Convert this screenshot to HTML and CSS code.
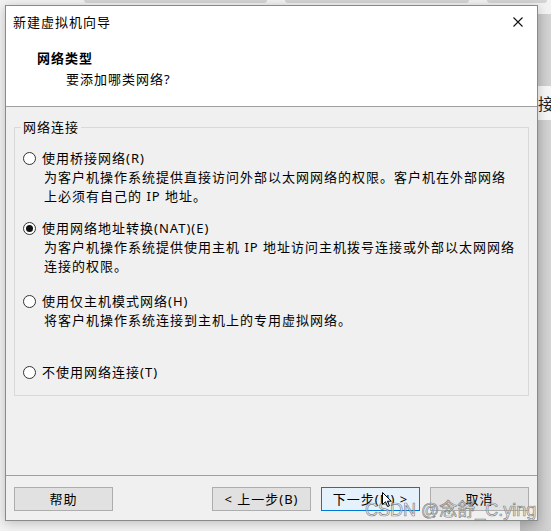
FILE: index.html
```html
<!DOCTYPE html>
<html lang="zh-CN">
<head>
<meta charset="utf-8">
<title>新建虚拟机向导</title>
<link rel="stylesheet" href="styles.css">
</head>
<body>
<div class="desktop">
  <div class="tabs"><span class="tab t1"></span><span class="tab t2"></span><span class="tab t3"></span></div>
  <div class="side-shade"></div>
  <div class="side-win"><span class="side-text">接</span></div>

  <div class="dialog">
    <div class="top">
      <div class="titlebar">
        <span class="title">新建虚拟机向导</span>
        <svg class="close" width="10" height="10" viewBox="0 0 10 10"><path d="M0.5 0.5 L9.5 9.5 M9.5 0.5 L0.5 9.5" stroke="#111" stroke-width="1.1" fill="none"/></svg>
      </div>
      <div class="header">
        <div class="h1">网络类型</div>
        <div class="sub">要添加哪类网络?</div>
      </div>
    </div>

    <div class="content">
      <fieldset class="group">
        <legend>网络连接</legend>
        <div class="opt">
          <div class="radio-row"><span class="radio"></span><span>使用桥接网络(R)</span></div>
          <p class="desc">为客户机操作系统提供直接访问外部以太网网络的权限。客户机在外部网络<br>上必须有自己的 IP 地址。</p>
        </div>
        <div class="opt opt2">
          <div class="radio-row"><span class="radio checked"></span><span>使用网络地址转换(NAT)(E)</span></div>
          <p class="desc">为客户机操作系统提供使用主机 IP 地址访问主机拨号连接或外部以太网网络<br>连接的权限。</p>
        </div>
        <div class="opt opt3">
          <div class="radio-row"><span class="radio"></span><span>使用仅主机模式网络(H)</span></div>
          <p class="desc">将客户机操作系统连接到主机上的专用虚拟网络。</p>
        </div>
        <div class="opt opt4">
          <div class="radio-row"><span class="radio"></span><span>不使用网络连接(T)</span></div>
        </div>
      </fieldset>
    </div>

    <div class="footer">
      <button class="btn">帮助</button>
      <div class="spacer"></div>
      <button class="btn">&lt; 上一步(B)</button>
      <button class="btn primary">下一步(N) &gt;</button>
      <button class="btn">取消</button>
    </div>
  </div>

  <div class="watermark">CSDN @念舒_C.ying</div>
  <svg class="cursor" width="12" height="16" viewBox="0 0 12 16"><path d="M0.5 0.5 L0.5 12.5 L3.5 9.8 L5.6 14.5 L7.4 13.7 L5.4 9.2 L9.3 9.2 Z" fill="#fff" stroke="#000" stroke-width="1"/></svg>
</div>
</body>
</html>
```
FILE: styles.css
```css
* { box-sizing: border-box; }
html, body { margin: 0; padding: 0; }
body {
  background: #f2f2f2;
  font-family: "Noto Sans", "Noto Sans CJK SC", sans-serif;
  overflow: hidden;
}
.desktop {
  position: relative;
  width: 551px;
  height: 531px;
  overflow: hidden;
  background: #f2f2f2;
}
.tabs {
  display: flex;
  height: 4px;
  padding-left: 84px;
  gap: 18px;
}
.tab { height: 3px; background: #d4d4d4; border-radius: 0 0 3px 3px; }
.t1 { width: 183px; }
.t2 { width: 184px; }
.t3 { width: 60px; }

.side-shade {
  position: absolute;
  left: 520px;
  top: 14px;
  width: 31px;
  height: 517px;
  background: linear-gradient(90deg, #b9b9b9, #d3d3d3);
}
.side-win {
  position: absolute;
  left: 500px;
  top: 86px;
  width: 51px;
  height: 34px;
  background: #f6f6f6;
  display: flex;
  justify-content: flex-end;
  align-items: center;
  overflow: hidden;
}
.side-text {
  font-family: "Noto Sans CJK SC", sans-serif;
  font-size: 16px;
  color: #222;
  margin-right: -3px;
}

.dialog {
  position: absolute;
  left: 5px;
  top: 5px;
  width: 533px;
  height: 516px;
  border: 1px solid #8a8a8a;
  background: #f0f0f0;
  display: flex;
  flex-direction: column;
  box-shadow: 0 2px 10px rgba(0, 0, 0, 0.22);
  font-size: 13px;
  letter-spacing: 1px;
  line-height: 19px;
  color: #000;
}
.top {
  height: 101px;
  background: #fff;
  border-bottom: 1px solid #a0a0a0;
}
.titlebar {
  height: 32px;
  display: flex;
  align-items: center;
  justify-content: space-between;
  padding: 0 14px 0 7px;
}
.close { display: block; }
.header { padding: 10px 0 0 31px; }
.h1 { font-weight: bold; line-height: 21px; }
.sub { margin-left: 29px; line-height: 21px; }

.content {
  flex: 1;
  padding: 0 8px;
}
.group {
  margin: 11px 0 0;
  border: 1px solid #d9d9d9;
  padding: 13px 0 13px 8px;
  min-width: 0;
}
.group legend {
  padding: 0 2px;
  margin-left: -2px;
  line-height: 18px;
}
.opt2 { margin-top: 13px; }
.opt3 { margin-top: 16px; }
.opt4 { margin-top: 33px; }
.radio-row {
  display: flex;
  align-items: center;
  gap: 6px;
  height: 19px;
}
.radio {
  width: 13px;
  height: 13px;
  flex: none;
  border: 1px solid #333;
  border-radius: 50%;
  background: #fff;
  display: grid;
  place-items: center;
}
.radio.checked::after {
  content: "";
  width: 7px;
  height: 7px;
  border-radius: 50%;
  background: #111;
}
.desc {
  margin: 0 0 0 21px;
  white-space: nowrap;
}

.footer {
  height: 45px;
  border-top: 1px solid #a0a0a0;
  display: flex;
  align-items: flex-start;
  padding: 11px 8px 0 8px;
  gap: 10px;
}
.spacer { flex: 1; }
.btn {
  width: 99px;
  height: 24px;
  flex: none;
  background: #e1e1e1;
  border: 1px solid #adadad;
  font: inherit;
  letter-spacing: 1px;
  color: #000;
  padding: 0;
  line-height: 20px;
}
.btn.primary {
  background: #e5f1fb;
  border-color: #0078d7;
}

.watermark {
  position: absolute;
  left: 365px;
  top: 501px;
  font-family: "Liberation Sans", "Noto Sans CJK SC", sans-serif;
  font-size: 18px;
  line-height: 18px;
  color: rgba(255, 255, 255, 0.55);
  -webkit-text-stroke: 0.7px rgba(110, 110, 110, 0.85);
  white-space: nowrap;
}
.cursor {
  position: absolute;
  left: 382px;
  top: 492px;
}
```
